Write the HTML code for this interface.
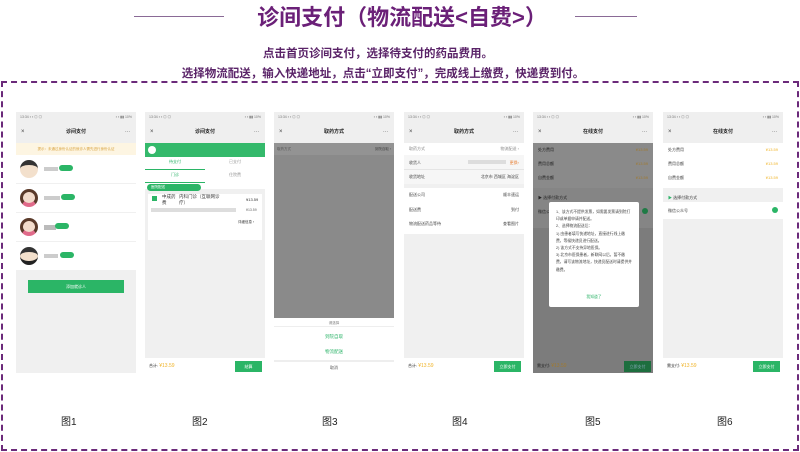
<!DOCTYPE html>
<html><head><meta charset="utf-8"><style>
*{margin:0;padding:0;box-sizing:border-box}
body{width:800px;height:452px;background:#fff;position:relative;overflow:hidden;font-family:"Liberation Sans","Noto Sans CJK SC",sans-serif}
.a{position:absolute}
.ph{position:absolute;top:112px;width:120px;height:261px;background:#f0f0f0;overflow:hidden;font-size:4px;color:#333}
.sb{position:absolute;left:0;top:0;width:120px;height:10px;background:#efefef;font-size:3.5px;color:#777;padding:3px 4px}
.nav{position:absolute;left:0;top:10px;width:120px;height:21px;background:#efefef;font-size:5px;font-weight:bold;text-align:center;line-height:21px;color:#222}
.nav:before{content:"×";position:absolute;left:5px;font-weight:normal;font-size:6px;color:#444}
.nav:after{content:"···";position:absolute;right:6px;font-weight:normal;color:#444}
.w{position:absolute;left:0;width:120px;background:#fff}
.g{color:#2eb46a}
.btn{position:absolute;background:#2bb566;color:#fff;text-align:center;font-size:4px}
.lbl{position:absolute;top:413px;font-size:10px;color:#222}
.row{position:absolute;left:0;width:120px;font-size:4px;padding:0 5px;color:#444}
.row span{float:right}
</style></head><body>
<div class="a" style="left:134px;top:16px;width:90px;height:1px;background:#8a6a96"></div>
<div class="a" style="left:575px;top:16px;width:62px;height:1px;background:#8a6a96"></div>
<div class="a" style="left:246px;top:4px;width:312px;text-align:center;font-size:22px;font-weight:bold;color:#6b2078;line-height:28px">诊间支付（物流配送&lt;自费&gt;）</div>
<div class="a" style="left:0;top:45px;width:756px;text-align:center;font-size:11.5px;font-weight:bold;color:#5a2368">点击首页诊间支付，选择待支付的药品费用。</div>
<div class="a" style="left:0;top:65px;width:766px;text-align:center;font-size:11.5px;font-weight:bold;color:#5a2368">选择物流配送，输入快递地址，点击“立即支付”，完成线上缴费，快递费到付。</div>
<div class="a" style="left:1px;top:81px;width:798px;height:370px;border:2px dashed #6b2a7a"></div>

<!-- phone1 -->
<div class="ph" style="left:16px">
<div class="sb">13:34 ▪ ▪ ◎ ◎ <span style="float:right">▪ ▪ ▮▮ 10%</span></div>
<div class="nav">诊间支付</div>
<div class="w" style="top:31px;height:12px;background:#fdf5e2;color:#d9a441;font-size:3.5px;line-height:12px;text-align:center">提示：未通过身份认证的就诊人需先进行身份认证</div>
<div class="w" style="top:43px;height:28px"></div>
<div class="w" style="top:72px;height:28px"></div>
<div class="w" style="top:101px;height:28px"></div>
<div class="w" style="top:130px;height:28px"></div>
<div class="a" style="left:4px;top:48px;width:18px;height:18px;border-radius:50%;background:#f3e0cc;border-top:5px solid #333"></div>
<div class="a" style="left:4px;top:77px;width:18px;height:18px;border-radius:50%;background:#f3dccc;border:3px solid #5a3a2a;border-bottom:4px solid #e06a8a"></div>
<div class="a" style="left:4px;top:106px;width:18px;height:18px;border-radius:50%;background:#f3dccc;border:3px solid #5a3a2a;border-bottom:4px solid #e06a8a"></div>
<div class="a" style="left:4px;top:135px;width:18px;height:18px;border-radius:50%;background:#f3e0cc;border-top:5px solid #333;border-bottom:4px solid #222"></div>
<div class="a" style="left:28px;top:55px;width:14px;height:4px;background:#ccc"></div><div class="a" style="left:43px;top:53px;width:14px;height:6px;border-radius:3px;background:#2bb566"></div>
<div class="a" style="left:28px;top:84px;width:16px;height:4px;background:#ccc"></div><div class="a" style="left:45px;top:82px;width:14px;height:6px;border-radius:3px;background:#2bb566"></div>
<div class="a" style="left:28px;top:113px;width:12px;height:5px;background:#bbb"></div><div class="a" style="left:39px;top:111px;width:14px;height:6px;border-radius:3px;background:#2bb566"></div>
<div class="a" style="left:28px;top:142px;width:14px;height:4px;background:#ccc"></div><div class="a" style="left:44px;top:140px;width:14px;height:6px;border-radius:3px;background:#2bb566"></div>
<div class="btn" style="left:12px;top:168px;width:96px;height:13px;line-height:13px">添加就诊人</div>
</div>

<!-- phone2 -->
<div class="ph" style="left:145px">
<div class="sb">13:34 ▪ ▪ ◎ ◎ <span style="float:right">▪ ▪ ▮▮ 10%</span></div>
<div class="nav">诊间支付</div>
<div class="w" style="top:31px;height:14px;background:#34b96b"></div>
<div class="a" style="left:3px;top:34px;width:8px;height:8px;border-radius:50%;background:#fff"></div>
<div class="w" style="top:45px;height:32px"></div>
<div class="a g" style="left:0;top:47px;width:60px;text-align:center">待支付</div>
<div class="a" style="left:60px;top:47px;width:60px;text-align:center;color:#999">已支付</div>
<div class="a" style="left:0;top:57px;width:60px;height:1px;background:#2bb566"></div>
<div class="a g" style="left:0;top:60px;width:60px;text-align:center">门诊</div>
<div class="a" style="left:60px;top:60px;width:60px;text-align:center;color:#999">住院费</div>
<div class="a" style="left:0;top:70px;width:60px;height:1px;background:#2bb566"></div>
<div class="a" style="left:2px;top:72px;width:54px;height:7px;border-radius:4px;background:#2bb566;color:#fff;font-size:3.5px;padding:1px 4px">医院配送</div>
<div class="w" style="left:3px;top:82px;width:114px;height:46px"></div>
<div class="a" style="left:7px;top:84px;width:5px;height:5px;background:#2bb566"></div>
<div class="a" style="left:17px;top:82px;font-size:4.5px;line-height:6px">中成药<br>费</div>
<div class="a" style="left:34px;top:82px;font-size:4.5px;line-height:6px">内科门诊（互联网诊<br>疗）</div>
<div class="a" style="left:101px;top:85px;font-size:4px">¥13.59</div>
<div class="a" style="left:6px;top:96px;width:85px;height:4px;background:#ddd"></div>
<div class="a" style="left:101px;top:96px;font-size:3.5px;color:#666">¥13.59</div>
<div class="a" style="left:93px;top:108px;font-size:3.5px">详细信息 ›</div>
<div class="w" style="top:246px;height:15px"></div>
<div class="a" style="left:4px;top:251px;font-size:4px">合计: <span style="color:#f0b429;font-size:5px">¥13.59</span></div>
<div class="btn" style="left:90px;top:249px;width:27px;height:11px;line-height:11px">结算</div>
</div>

<!-- phone3 -->
<div class="ph" style="left:274px;background:#fff">
<div class="sb">13:34 ▪ ▪ ◎ ◎ <span style="float:right">▪ ▪ ▮▮ 10%</span></div>
<div class="nav">取药方式</div>
<div class="a" style="left:0;top:31px;width:120px;height:175px;background:#8a8a8a"></div>
<div class="a" style="left:0;top:31px;width:120px;height:12px;background:#939393;font-size:3.5px;color:#555;padding:4px 3px">取药方式<span style="float:right;color:#444">到院自取 ›</span></div>
<div class="a" style="left:0;top:209px;width:120px;text-align:center;color:#777;font-size:3.5px">请选择</div>
<div class="a" style="left:0;top:214px;width:120px;height:1px;background:#eee"></div>
<div class="a g" style="left:0;top:222px;width:120px;text-align:center;font-size:4.5px">到院自取</div>
<div class="a g" style="left:0;top:237px;width:120px;text-align:center;font-size:4.5px">物流配送</div>
<div class="a" style="left:0;top:248px;width:120px;height:2px;background:#eee"></div>
<div class="a" style="left:0;top:253px;width:120px;text-align:center;color:#555;font-size:4px">取消</div>
</div>

<!-- phone4 -->
<div class="ph" style="left:404px">
<div class="sb">13:34 ▪ ▪ ◎ ◎ <span style="float:right">▪ ▪ ▮▮ 10%</span></div>
<div class="nav">取药方式</div>
<div class="w" style="top:31px;height:12px"></div>
<div class="row" style="top:34px;color:#888">取药方式<span>物流配送 ›</span></div>
<div class="w" style="top:43px;height:29px;background:#f6f6f6"></div>
<div class="row" style="top:48px">收货人<span style="color:#e8833a">更换›</span></div>
<div class="a" style="left:64px;top:48px;width:38px;height:4px;background:#ddd"></div>
<div class="a" style="left:0;top:57px;width:120px;height:1px;background:#e5e5e5"></div>
<div class="row" style="top:62px">收货地址<span>北京市 西城区 海淀区</span></div>
<div class="w" style="top:76px;height:46px"></div>
<div class="row" style="top:80px">配送公司<span>顺丰速运</span></div>
<div class="row" style="top:95px">配送费<span>到付</span></div>
<div class="row" style="top:109px">物流配送药品等待<span>查看图片</span></div>
<div class="w" style="top:246px;height:15px"></div>
<div class="a" style="left:4px;top:251px;font-size:4px">合计: <span style="color:#f0b429;font-size:5px">¥13.59</span></div>
<div class="btn" style="left:90px;top:249px;width:27px;height:11px;line-height:11px">立即支付</div>
</div>

<!-- phone5 -->
<div class="ph" style="left:533px;background:#7c7c7c">
<div class="sb">13:34 ▪ ▪ ◎ ◎ <span style="float:right">▪ ▪ ▮▮ 10%</span></div>
<div class="nav">在线支付</div>
<div class="a" style="left:0;top:31px;width:120px;height:45px;background:#8a8a8a"></div>
<div class="row" style="top:35px;color:#222">处方费用<span style="color:#a07a30">¥13.59</span></div>
<div class="row" style="top:49px;color:#222">费用总额<span style="color:#a07a30">¥13.59</span></div>
<div class="row" style="top:63px;color:#222">自费金额<span style="color:#a07a30">¥13.59</span></div>
<div class="a" style="left:0;top:76px;width:120px;height:40px;background:#858585"></div>
<div class="row" style="top:83px;color:#222">▶ 选择付款方式</div>
<div class="row" style="top:97px;color:#222">微信公众号</div>
<div class="a" style="left:109px;top:96px;width:6px;height:6px;border-radius:50%;background:#1f7a45"></div>
<div class="a" style="left:16px;top:90px;width:90px;height:105px;background:#fff;border-radius:2px;font-size:3.8px;line-height:7.2px;color:#444;padding:7px 7px">1、该方式不提供发票，如需要发票请到院打印或单据申请并配送。<br>2、选择物流配送后：<br>1) 由患者填写快递地址，直接进行线上缴费，等候快递员进行配送。<br>2) 该方式不支持异地医保。<br>3) 北京市医保患者，新联网以后，暂不缴费，请写该物流地址，快递员配送时请提供并缴费。</div>
<div class="a g" style="left:16px;top:183px;width:90px;text-align:center;font-size:3.8px">我知道了</div>
<div class="a" style="left:0;top:246px;width:120px;height:15px;background:#7c7c7c"></div>
<div class="a" style="left:4px;top:251px;font-size:4px;color:#222">需支付: <span style="color:#a07a30;font-size:5px">¥13.59</span></div>
<div class="btn" style="left:91px;top:249px;width:27px;height:11px;line-height:11px;background:#1d6e3e;color:#8ab">立即支付</div>
</div>

<!-- phone6 -->
<div class="ph" style="left:663px">
<div class="sb">13:34 ▪ ▪ ◎ ◎ <span style="float:right">▪ ▪ ▮▮ 10%</span></div>
<div class="nav">在线支付</div>
<div class="w" style="top:31px;height:45px"></div>
<div class="row" style="top:35px">处方费用<span style="color:#f0b429">¥13.59</span></div>
<div class="row" style="top:49px">费用总额<span style="color:#f0b429">¥13.59</span></div>
<div class="row" style="top:63px">自费金额<span style="color:#f0b429">¥13.59</span></div>
<div class="row" style="top:83px;color:#333"><b class="g">▶</b> 选择付款方式</div>
<div class="w" style="top:90px;height:17px"></div>
<div class="row" style="top:96px">微信公众号</div>
<div class="a" style="left:109px;top:95px;width:6px;height:6px;border-radius:50%;background:#2bb566"></div>
<div class="w" style="top:246px;height:15px"></div>
<div class="a" style="left:4px;top:251px;font-size:4px">需支付: <span style="color:#f0b429;font-size:5px">¥13.59</span></div>
<div class="btn" style="left:90px;top:249px;width:27px;height:11px;line-height:11px">立即支付</div>
</div>

<div class="lbl" style="left:61px">图1</div>
<div class="lbl" style="left:192px">图2</div>
<div class="lbl" style="left:322px">图3</div>
<div class="lbl" style="left:452px">图4</div>
<div class="lbl" style="left:585px">图5</div>
<div class="lbl" style="left:717px">图6</div>
</body></html>
